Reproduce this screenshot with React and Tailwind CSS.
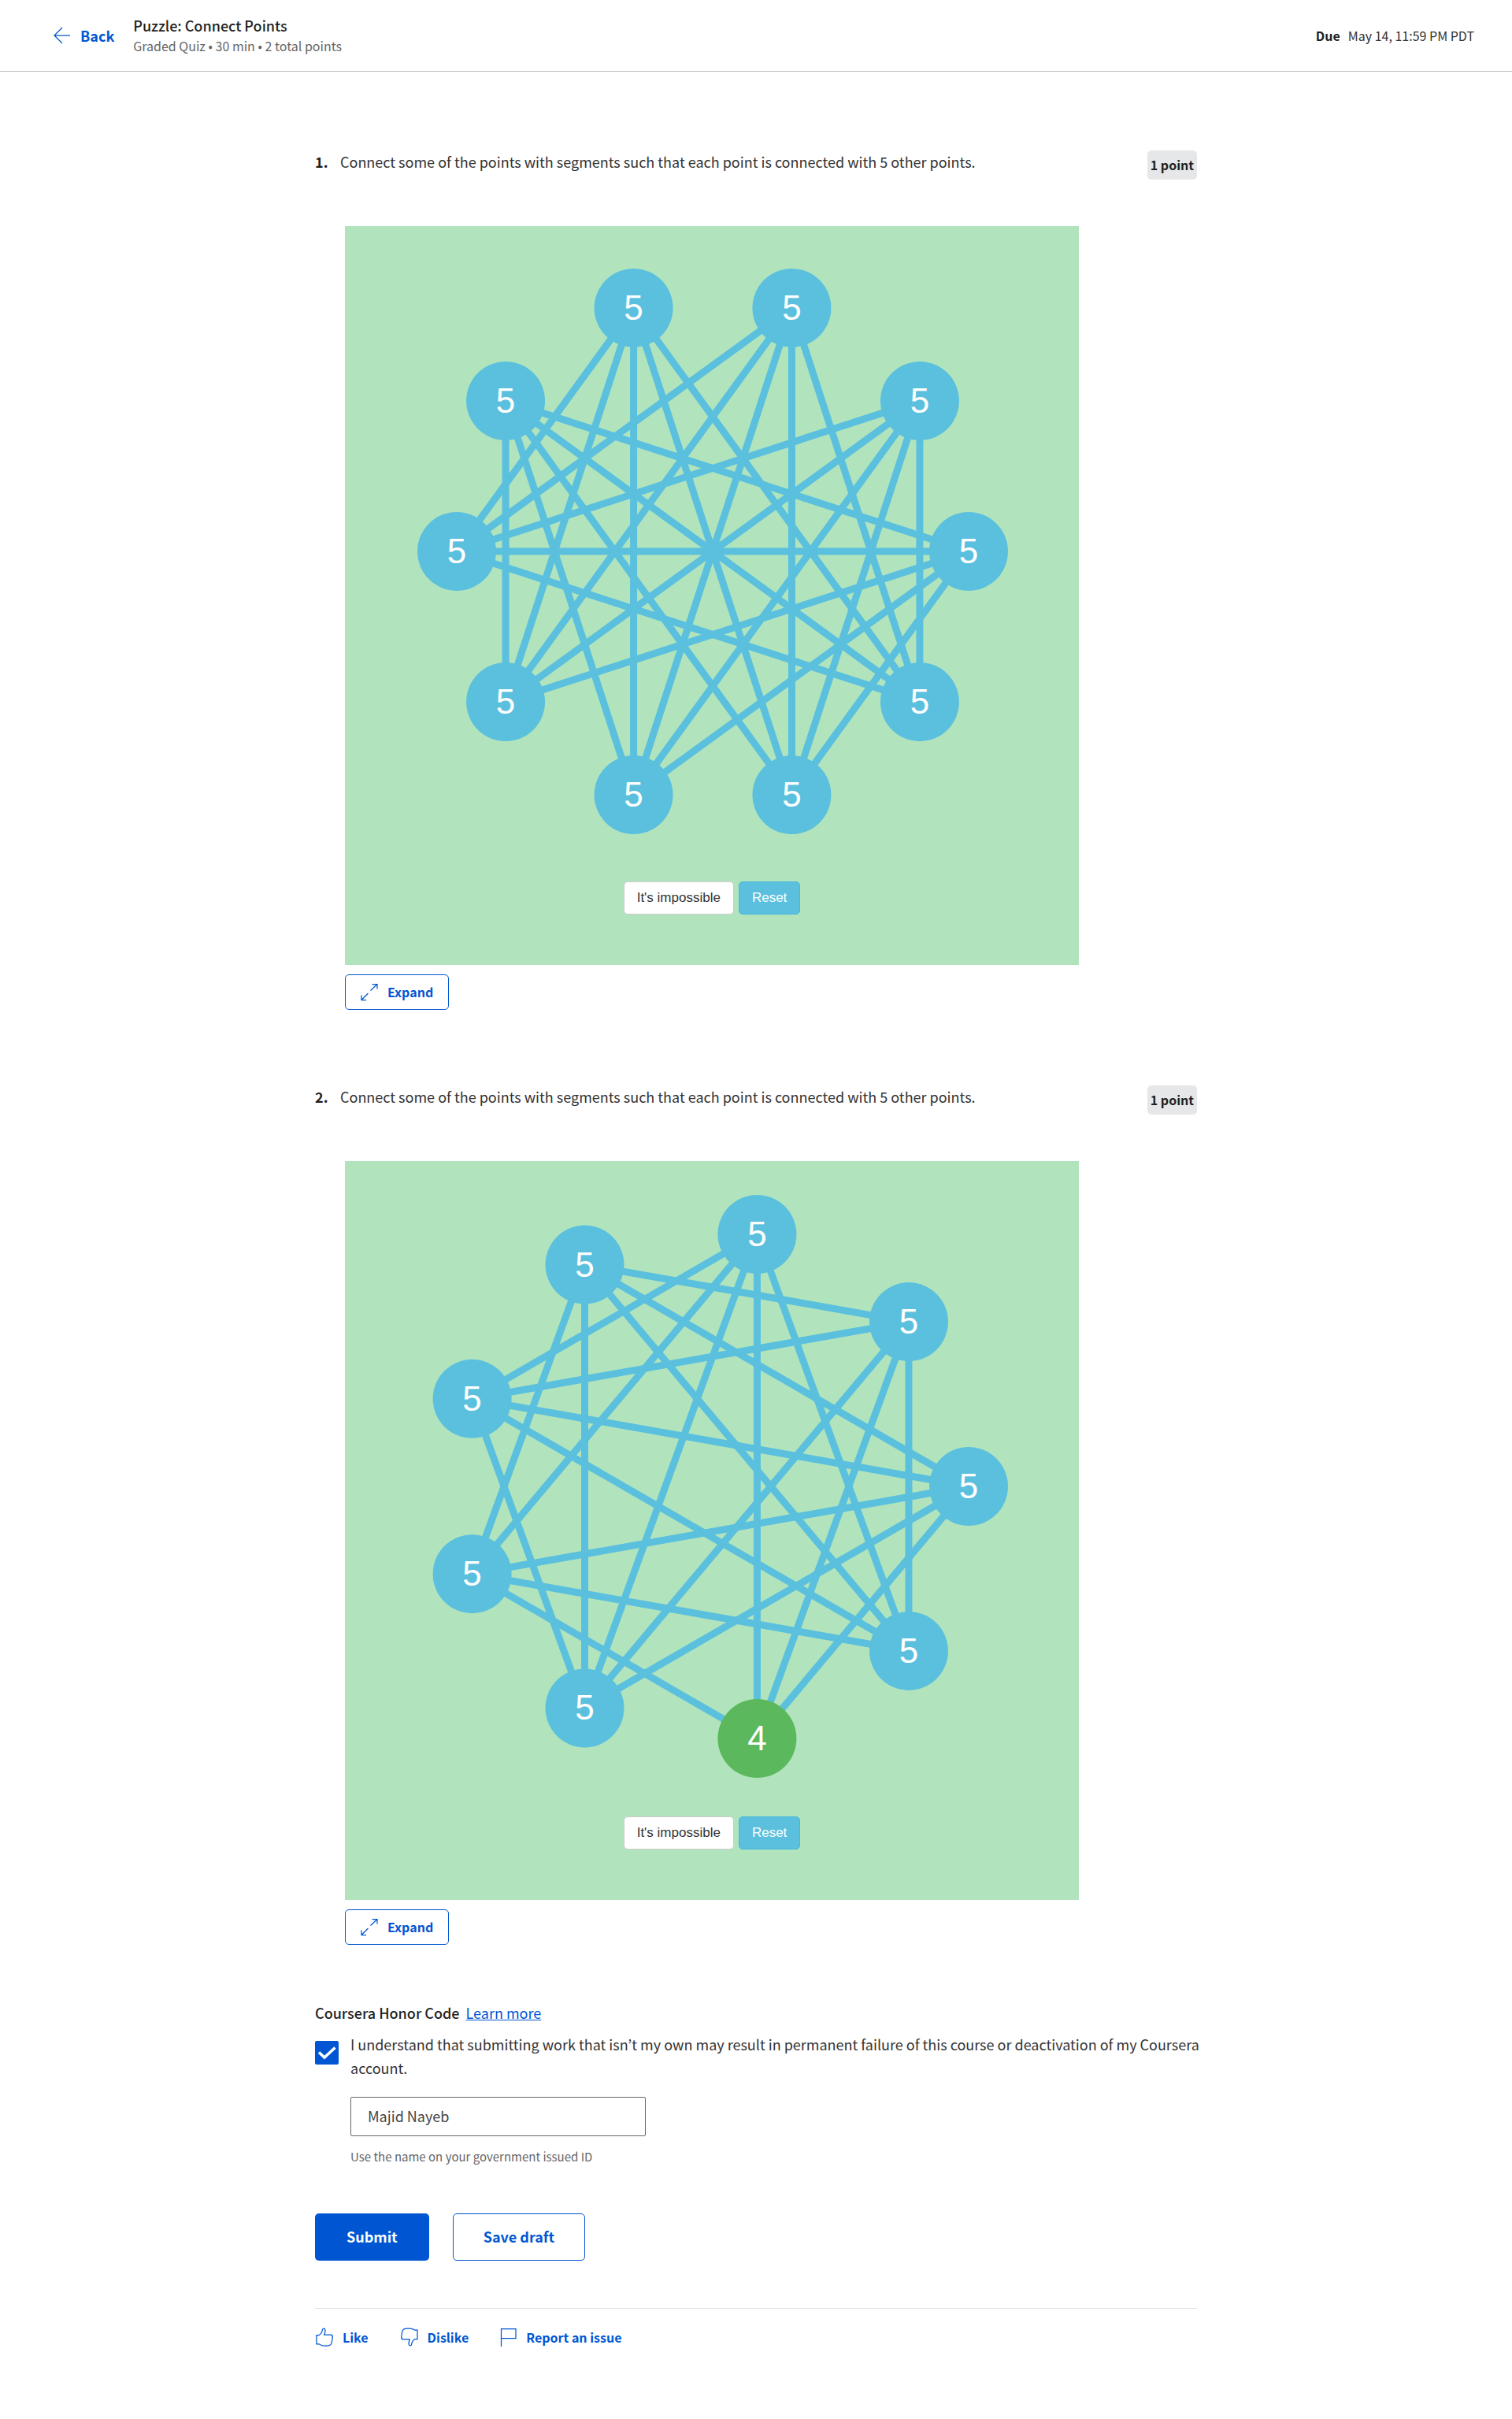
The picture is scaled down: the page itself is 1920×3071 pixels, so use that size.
import { useState } from "react";

const TAU = Math.PI * 2;
const CENTER = { x: 467, y: 413 };
const ORBIT = 325;

// Vertices are numbered counter-clockwise, starting at the rightmost one.
const puzzles = [
  {
    number: 1,
    count: 10,
    edges: [
      [0, 4], [0, 5], [0, 6], [0, 7], [0, 8],
      [1, 5], [1, 6], [1, 7], [1, 8], [1, 9],
      [2, 5], [2, 6], [2, 7], [2, 8], [2, 9],
      [3, 5], [3, 6], [3, 7], [3, 8], [3, 9],
      [4, 6], [4, 7], [4, 8], [4, 9],
      [5, 9],
    ],
  },
  {
    number: 2,
    count: 9,
    edges: [
      [0, 3], [0, 4], [0, 5], [0, 6], [0, 7],
      [1, 3], [1, 4], [1, 6], [1, 7], [1, 8],
      [2, 4], [2, 5], [2, 6], [2, 7], [2, 8],
      [3, 5], [3, 6], [3, 8],
      [4, 6], [4, 8],
      [5, 7], [5, 8],
    ],
  },
];

function vertex(index, count) {
  const angle = (index * TAU) / count;
  return {
    x: CENTER.x + ORBIT * Math.cos(angle),
    y: CENTER.y - ORBIT * Math.sin(angle),
  };
}

function Graph({ count, edges }) {
  const vertices = Array.from({ length: count }, (_, i) => ({
    ...vertex(i, count),
    degree: edges.filter((edge) => edge.includes(i)).length,
  }));
  return (
    <svg viewBox="0 0 932 832" className="block w-full" role="img" aria-label="Points and segments">
      {edges.map(([a, b]) => (
        <line
          key={`${a}-${b}`}
          x1={vertices[a].x}
          y1={vertices[a].y}
          x2={vertices[b].x}
          y2={vertices[b].y}
          stroke="#5bc0de"
          strokeWidth="9"
        />
      ))}
      {vertices.map((v, i) => (
        <g key={i}>
          <circle cx={v.x} cy={v.y} r="50" fill={v.degree === 5 ? "#5bc0de" : "#5cb85c"} />
          <text
            x={v.x}
            y={v.y + 15}
            textAnchor="middle"
            fill="#fff"
            className="font-['Liberation_Sans',Arial,sans-serif] text-[44px]"
          >
            {v.degree}
          </text>
        </g>
      ))}
    </svg>
  );
}

function Icon({ children, className }) {
  return (
    <svg
      viewBox="0 0 22 24"
      fill="none"
      stroke="currentColor"
      strokeWidth="1.25"
      aria-hidden="true"
      className={className}
    >
      {children}
    </svg>
  );
}

function Question({ number, count, edges }) {
  return (
    <section>
      <div className="flex items-start">
        <h2 className="w-8 shrink-0 text-lg leading-7 font-bold">{number}.</h2>
        <p className="flex-1 text-lg leading-7 text-[#333]">
          Connect some of the points with segments such that each point is connected with 5 other points.
        </p>
        <span className="flex h-[37px] shrink-0 items-center rounded-[5px] bg-[#e5e7e8] px-1 pb-[2px] text-base font-bold">
          1 point
        </span>
      </div>
      <div className="mt-[59px] ml-[38px] max-w-[932px] bg-[#b1e4bd] pb-16">
        <Graph count={count} edges={edges} />
        <div className="flex justify-center gap-[6px] font-['Liberation_Sans',Arial,sans-serif] text-[17px] leading-6">
          <button type="button" className="h-[42px] rounded-[5px] border border-[#ccc] bg-white px-4 text-[#333]">
            It's impossible
          </button>
          <button type="button" className="h-[42px] rounded-[5px] border border-[#46b8da] bg-[#5bc0de] px-4 text-white">
            Reset
          </button>
        </div>
      </div>
      <button
        type="button"
        className="mt-3 ml-[38px] flex h-[45px] items-center gap-3 rounded-[5px] border border-[#0056d2] px-[19px] pb-[2px] text-base font-bold text-[#0056d2]"
      >
        <Icon className="h-6 w-[22px]">
          <path d="M1 16.500V22.500H7M1 22.500L9.500 14M12.500 10.500L21 2.500M14.500 2.500H21V8.500" />
        </Icon>
        Expand
      </button>
    </section>
  );
}

export default function App() {
  const [agreed, setAgreed] = useState(true);
  const [name, setName] = useState("Majid Nayeb");

  return (
    <div className="bg-white font-['Noto_Sans_CJK_KR','Noto_Sans',sans-serif] text-[#1f1f1f]">
      <header className="flex h-[91px] items-center border-b border-[#bdbdbd] px-12">
        <a href="#back" className="flex items-center gap-3 pl-5 text-lg leading-6 font-bold text-[#0056d2]">
          <Icon className="h-6 w-[22px]">
            <path d="M11 2L1 12L11 22M1 12H21" />
          </Icon>
          Back
        </a>
        <div className="ml-6">
          <h1 className="text-lg leading-[26px] font-medium">Puzzle: Connect Points</h1>
          <p className="text-base leading-[26px] text-[#666]">Graded Quiz • 30 min • 2 total points</p>
        </div>
        <p className="ml-auto flex gap-[10px] text-base leading-6">
          <span className="font-bold">Due</span>
          <span className="text-[#333]">May 14, 11:59 PM PDT</span>
        </p>
      </header>

      <main className="mx-auto max-w-[1120px] pt-[100px] pb-[72px]">
        <div className="flex flex-col gap-[96px]">
          {puzzles.map((p) => (
            <Question key={p.number} {...p} />
          ))}
        </div>

        <div className="mt-[71px] flex items-center gap-2 text-lg leading-[30px]">
          <h2 className="font-medium">Coursera Honor Code</h2>
          <a href="#honor" className="text-[#0056d2] underline">Learn more</a>
        </div>

        <div className="-mr-2 mt-[10px] flex items-start">
          <span className="relative mt-[11px] mr-[15px] size-[30px] shrink-0">
            <input
              id="agree"
              type="checkbox"
              checked={agreed}
              onChange={(e) => setAgreed(e.target.checked)}
              className="block size-[30px] appearance-none rounded-[2px] border-2 border-[#0056d2] checked:bg-[#0056d2]"
            />
            <svg viewBox="0 0 30 30" aria-hidden="true" className="pointer-events-none absolute inset-0">
              <path d="M5 14.500L12 21L25.500 8.500" fill="none" stroke="#fff" strokeWidth="3.500" />
            </svg>
          </span>
          <label htmlFor="agree" className="text-lg leading-[30px] text-[#333]">
            I understand that submitting work that isn’t my own may result in permanent failure of this course or
            deactivation of my Coursera account.
          </label>
        </div>

        <div className="mt-[22px] ml-[45px]">
          <input
            id="legal-name"
            type="text"
            value={name}
            onChange={(e) => setName(e.target.value)}
            className="block h-[50px] w-full max-w-[375px] rounded-[2px] border border-[#666] px-[21px] pb-[2px] text-lg text-[#444]"
          />
          <label htmlFor="legal-name" className="mt-[15px] block text-[15px] leading-[22px] text-[#666]">
            Use the name on your government issued ID
          </label>
        </div>

        <div className="mt-[61px] flex gap-[30px] text-lg font-bold">
          <button type="button" className="h-[60px] rounded-[5px] bg-[#0056d2] px-10 pb-[2px] text-white">
            Submit
          </button>
          <button type="button" className="h-[60px] rounded-[5px] border border-[#0056d2] px-[38px] pb-[2px] text-[#0056d2]">
            Save draft
          </button>
        </div>

        <hr className="mt-[60px] border-[#e1e1e1]" />

        <div className="mt-6 flex gap-10 text-base leading-6 font-bold text-[#0056d2]">
          <button type="button" className="flex items-center gap-[11px]">
            <Icon className="h-6 w-6">
              <path d="M1 9.500H4C6 8.500 8 5.500 8.500 2.500C8.800 .500 11.800 .800 12 3.200C12.100 5 11.200 7.500 10.800 9.200H19.500C21.500 9.800 21.500 11.500 21.200 13C21 15.500 20.500 18.500 19.500 21C18.500 22.500 17 23 14.500 23H10C7.500 23 6 22 4 20.800H1Z" />
            </Icon>
            Like
          </button>
          <button type="button" className="flex items-center gap-[11px]">
            <Icon className="h-6 w-6">
              <path d="M21 14.500H18C16 15.500 14 18.500 13.500 21.500C13.200 23.500 10.200 23.200 10 20.800C9.900 19 10.800 16.500 11.200 14.800H2.500C.500 14.200 .500 12.500 .800 11C1 8.500 1.500 5.500 2.500 3C3.500 1.500 5 1 7.500 1H12C14.500 1 16 2 18 3.200H21Z" />
            </Icon>
            Dislike
          </button>
          <button type="button" className="flex items-center gap-[11px]">
            <Icon className="h-6 w-[22px]">
              <path d="M1.500 24V1.500H20V13.500H1.500" />
            </Icon>
            Report an issue
          </button>
        </div>
      </main>
    </div>
  );
}
